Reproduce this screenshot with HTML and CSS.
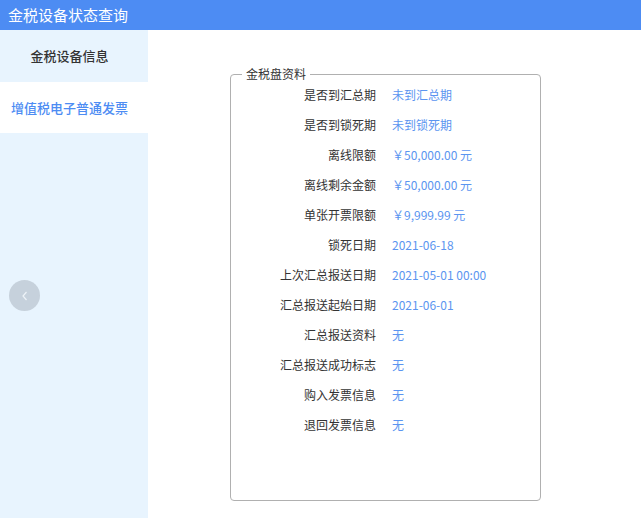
FILE: index.html
```html
<!DOCTYPE html>
<html lang="zh">
<head>
<meta charset="utf-8">
<title>金税设备状态查询</title>
<link rel="stylesheet" href="styles.css">
</head>
<body>
<header class="topbar">金税设备状态查询</header>
<div class="layout">
  <nav class="sidebar">
    <div class="nav-item">金税设备信息</div>
    <div class="nav-item active">增值税电子普通发票</div>
    <button class="collapse-btn" aria-label="收起">
      <svg width="10" height="12" viewBox="0 0 10 12"><path d="M6.5 2 L3 6 L6.5 10" fill="none" stroke="#eef3f8" stroke-width="1.2"/></svg>
    </button>
  </nav>
  <main class="main">
    <fieldset class="panel">
      <legend class="panel-title">金税盘资料</legend>
      <div class="rows">
        <div class="label">是否到汇总期</div><div class="value">未到汇总期</div>
        <div class="label">是否到锁死期</div><div class="value">未到锁死期</div>
        <div class="label">离线限额</div><div class="value">￥50,000.00 元</div>
        <div class="label">离线剩余金额</div><div class="value">￥50,000.00 元</div>
        <div class="label">单张开票限额</div><div class="value">￥9,999.99 元</div>
        <div class="label">锁死日期</div><div class="value">2021-06-18</div>
        <div class="label">上次汇总报送日期</div><div class="value">2021-05-01 00:00</div>
        <div class="label">汇总报送起始日期</div><div class="value">2021-06-01</div>
        <div class="label">汇总报送资料</div><div class="value">无</div>
        <div class="label">汇总报送成功标志</div><div class="value">无</div>
        <div class="label">购入发票信息</div><div class="value">无</div>
        <div class="label">退回发票信息</div><div class="value">无</div>
      </div>
    </fieldset>
  </main>
</div>
</body>
</html>
```
FILE: styles.css
```css
* { box-sizing: border-box; }
html, body {
  margin: 0;
  padding: 0;
  background: #fff;
  font-family: "Noto Sans CJK SC", "Noto Sans", sans-serif;
  color: #333;
}
.topbar {
  height: 30px;
  background: #4d8cf3;
  color: #fff;
  font-size: 15px;
  line-height: 30px;
  padding-left: 8px;
}
.layout {
  display: flex;
  height: 488px;
}
.sidebar {
  position: relative;
  width: 148px;
  flex: none;
  background: #e8f4fe;
}
.nav-item {
  height: 52px;
  line-height: 52px;
  font-size: 13px;
  font-weight: 500;
  text-align: center;
  padding-right: 9px;
  color: #333;
}
.nav-item.active {
  height: 51px;
  line-height: 51px;
  background: #fff;
  color: #4d8cf3;
}
.collapse-btn {
  position: absolute;
  left: 9px;
  top: 250px;
  width: 31px;
  height: 31px;
  border-radius: 50%;
  border: none;
  padding: 0;
  background: #c6d1dc;
  display: flex;
  align-items: center;
  justify-content: center;
}
.main {
  flex: 1;
  padding: 36px 0 0 82px;
}
.panel {
  margin: 0;
  width: 311px;
  height: 435px;
  border: 1px solid #b0b0b0;
  border-radius: 4px;
  padding: 0;
}
.panel-title {
  font-size: 12px;
  line-height: 16px;
  padding: 0 4px;
  margin-left: 11px;
  color: #333;
}
.rows {
  display: grid;
  grid-template-columns: 145px 1fr;
  grid-auto-rows: 30px;
  column-gap: 16px;
  margin-top: -3px;
  font-size: 12px;
  align-items: center;
}
.label {
  text-align: right;
  color: #333;
}
.value {
  color: #5b95f0;
}
```
